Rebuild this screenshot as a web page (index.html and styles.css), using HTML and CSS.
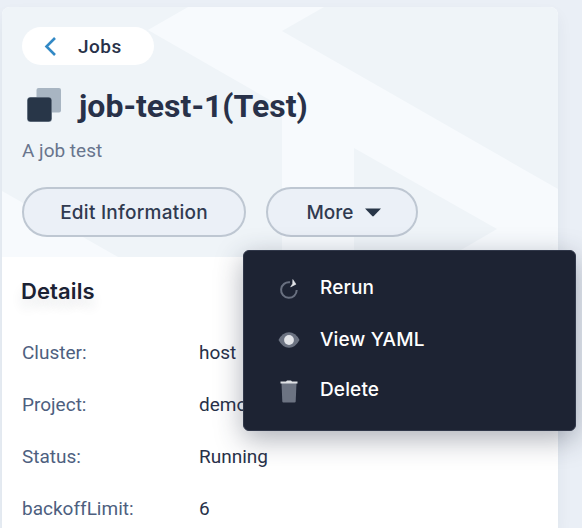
FILE: index.html
```html
<!DOCTYPE html>
<html lang="en">
<head>
<meta charset="utf-8">
<title>job-test-1</title>
<link rel="stylesheet" href="styles.css">
</head>
<body>
<main class="card">
  <header class="hero">
    <svg class="pattern" viewBox="2 7 556 250" preserveAspectRatio="none" aria-hidden="true">
      <path d="M148 30 188 7H324L282 31 558 189V257H449L497 229 354 148V257H282V107ZM2 191 118 257H2Z"/>
    </svg>
    <a class="back"><svg width="12" height="20" viewBox="0 0 12 20"><path d="M11 2 2.500 10.500l8.500 8.500" fill="none" stroke="#3289c5" stroke-width="2.600"/></svg><span>Jobs</span></a>
    <div class="title">
      <svg width="36" height="36" viewBox="0 0 36 36"><rect x="9.500" y="1" width="24.500" height="24.500" rx="2" fill="#a8b5c2"/><rect x="0" y="10" width="25" height="25" rx="3.500" fill="#8c99a7"/><rect x=".6" y="10.600" width="23.800" height="23.800" rx="3" fill="#283648"/></svg>
      <h1>job-test-1(Test)</h1>
    </div>
    <p class="desc">A job test</p>
    <div class="actions">
      <button class="btn edit"><span>Edit Information</span></button>
      <div class="dropdown">
        <button class="btn more"><span>More</span><svg width="16" height="9" viewBox="0 0 16 9"><path d="M0 .5H16L8.800 8Q8 8.800 7.200 8Z" fill="#283648"/></svg></button>
        <div class="menu">
          <div class="item"><svg width="24" height="24" viewBox="0 0 24 24"><path d="M13 5.300A7.800 7.800 0 1 0 19.700 13" fill="none" stroke="#697080" stroke-width="2"/><path d="M15.800 2.500 19 7.200 13.600 10 15.600 6.800Z" fill="#e3e5e9" stroke="#e3e5e9" stroke-width=".5"/></svg><span>Rerun</span></div>
          <div class="item view"><svg width="24" height="24" viewBox="0 0 24 24"><path d="M1.500 12Q5.500 4.300 12 4.300T22.500 12Q18.500 19.700 12 19.700T1.500 12Z" fill="#6c7382"/><circle cx="12" cy="12" r="4.900" fill="#e3e5e9"/></svg><span>View YAML</span></div>
          <div class="item"><svg width="24" height="24" viewBox="0 0 24 24"><path d="M4.500 4H19.500L18.700 22.500Q18.600 23.500 17.600 23.500H6.400Q5.400 23.500 5.300 22.500Z" fill="#6c7382"/><path d="M3.500 2.500H9L10 1.500H14L15 2.500H20.500V4.500H3.500Z" fill="#dfe1e5"/></svg><span>Delete</span></div>
        </div>
      </div>
    </div>
  </header>
  <section class="details">
    <h2>Details</h2>
    <dl>
      <dt>Cluster:</dt><dd>host</dd>
      <dt>Project:</dt><dd>demo</dd>
      <dt>Status:</dt><dd>Running</dd>
      <dt>backoffLimit:</dt><dd>6</dd>
    </dl>
  </section>
</main>
</body>
</html>
```
FILE: styles.css
```css
* { box-sizing: border-box; }
body {
  margin: 0;
  padding: 7px 24px 0 2px;
  height: 528px;
  overflow: hidden;
  background: #eaeff6;
  font-family: Roboto, sans-serif;
  color: #283149;
}
h1, h2, p, dl, dd { margin: 0; }
svg { flex: none; display: block; }
.card {
  height: 521px;
  background: #fff;
  border-radius: 8px 8px 0 0;
  box-shadow: 0 8px 16px rgba(36, 46, 66, .06);
}
.hero {
  position: relative;
  height: 250px;
  padding: 20px 20px 0;
  background: #eff4f8;
  border-radius: 8px 8px 0 0;
}
.pattern { position: absolute; inset: 0; width: 100%; height: 100%; fill: #f7fafd; }
.back {
  position: relative;
  display: flex;
  align-items: center;
  gap: 22px;
  width: 132px;
  height: 38px;
  padding-left: 22px;
  border-radius: 19px;
  background: #fff;
  font-size: 19px;
  font-weight: 500;
  letter-spacing: .5px;
}
.title {
  position: relative;
  display: flex;
  align-items: center;
  gap: 16px;
  height: 36px;
  margin: 22px 0 0 5px;
}
.title h1 { padding-top: 2px; font-size: 32px; line-height: 36px; font-weight: 700; white-space: nowrap; }
.desc {
  position: relative;
  margin-top: 16px;
  font-size: 19px;
  line-height: 24px;
  color: #68758d;
}
.actions { position: relative; display: flex; gap: 20px; margin-top: 24px; }
.btn {
  display: flex;
  align-items: center;
  justify-content: center;
  height: 50px;
  padding: 1px 0 0;
  border: 2px solid #bec7d2;
  border-radius: 25px;
  background: #ebf0f7;
  color: #303a50;
  font: 500 19px/24px Inter, sans-serif;
}
.edit { width: 224px; letter-spacing: .25px; }
.more { width: 152px; gap: 12px; padding-left: 4px; }
.dropdown { position: relative; }
.menu {
  position: absolute;
  z-index: 1;
  top: 63px;
  left: -23px;
  width: 333px;
  height: 181px;
  padding: 11px 33px;
  border-radius: 6px;
  background: #1d2333;
  border: 1px solid #303749;
  box-shadow: 0 8px 28px rgba(36, 46, 66, .38);
  color: #fff;
  font: 500 19px/24px Inter, sans-serif;
  letter-spacing: .15px;
}
.item { display: flex; align-items: center; gap: 19px; height: 51px; }
.item svg { margin-top: 2px; }
.view { padding-top: 2px; }
.view svg { margin-top: 0; }
.details { padding: 19px 20px 0; }
.details h2 {
  font: 600 22px/30px Inter, sans-serif;
  letter-spacing: .1px;
  margin-left: -1px;
  color: #1b2234;
  text-shadow: 0 8px 12px rgba(36, 46, 66, .12);
}
.details dl {
  display: grid;
  grid-template-columns: 177px 1fr;
  grid-auto-rows: 52px;
  height: 200px;
  align-items: center;
  margin-top: 21px;
  font-size: 19px;
  line-height: 24px;
}
.details dt { color: #4e5f7f; }
.details dd { color: #283149; }
```
